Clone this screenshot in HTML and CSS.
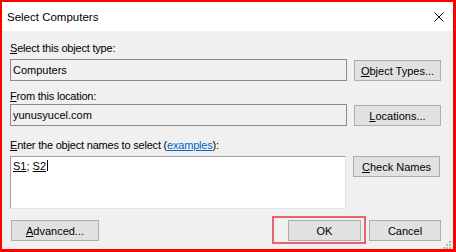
FILE: index.html
```html
<!DOCTYPE html>
<html lang="en">
<head>
    <meta charset="UTF-8">
    <meta name="viewport" content="width=device-width, initial-scale=1.0">
    <title>Select Computers</title>
    <link rel="stylesheet" href="styles.css">
</head>
<body>
    <div class="window">
        <div class="titlebar">
            <span class="title">Select Computers</span>
            <svg class="close" width="10" height="10" viewBox="0 0 10 10">
                <path d="M0.5 0.5 L9.5 9.5 M9.5 0.5 L0.5 9.5" stroke="#000" stroke-width="1" fill="none"/>
            </svg>
        </div>

        <div class="content">
            <div class="label"><u>S</u>elect this object type:</div>
            <div class="row">
                <div class="field">Computers</div>
                <button class="btn"><u>O</u>bject Types...</button>
            </div>

            <div class="label label-location"><u>F</u>rom this location:</div>
            <div class="row">
                <div class="field">yunusyucel.com</div>
                <button class="btn"><u>L</u>ocations...</button>
            </div>

            <div class="label label-names"><u>E</u>nter the object names to select (<a class="link" href="#">examples</a>):</div>
            <div class="row row-names">
                <div class="names"><span class="resolved">S1</span>; <span class="resolved">S2</span><span class="caret"></span></div>
                <button class="btn btn-top"><u>C</u>heck Names</button>
            </div>

            <div class="actions">
                <button class="btn btn-advanced"><u>A</u>dvanced...</button>
                <div class="spacer"></div>
                <div class="ok-wrap">
                    <button class="btn btn-ok">OK</button>
                    <span class="highlight"></span>
                </div>
                <button class="btn btn-cancel">Cancel</button>
            </div>
        </div>

        <svg class="grip" width="9" height="9" viewBox="0 0 9 9">
            <rect x="6" y="1" width="2" height="2" fill="#b8b8b8"/>
            <rect x="3" y="4" width="2" height="2" fill="#b8b8b8"/>
            <rect x="6" y="4" width="2" height="2" fill="#b8b8b8"/>
            <rect x="0" y="7" width="2" height="2" fill="#b8b8b8"/>
            <rect x="3" y="7" width="2" height="2" fill="#b8b8b8"/>
            <rect x="6" y="7" width="2" height="2" fill="#b8b8b8"/>
        </svg>
    </div>
</body>
</html>
```

FILE: styles.css
```css
body {
    margin: 0;
    font-family: 'Liberation Sans', Arial, sans-serif;
    font-size: 11px;
    color: #000;
}

.window {
    position: relative;
    width: 456px;
    height: 252px;
    box-sizing: border-box;
    border: 2px solid #ff0000;
    border-right-width: 3px;
    border-bottom-width: 3px;
    display: flex;
    flex-direction: column;
}

.titlebar {
    height: 29px;
    flex-shrink: 0;
    background-color: #fff;
    display: flex;
    align-items: center;
    padding: 0 9px 0 5px;
}

.title {
    font-size: 11.5px;
    flex: 1;
}

.content {
    flex: 1;
    background-color: #f0f0f0;
    padding: 10px 12px 0 8px;
    display: flex;
    flex-direction: column;
}

.label {
    line-height: 15px;
    letter-spacing: -0.2px;
}

.label-location {
    margin-top: 8px;
}

.label-names {
    margin-top: 12px;
}

.link {
    color: #0066cc;
}

.row {
    display: flex;
    gap: 7px;
    margin-top: 3px;
    align-items: flex-start;
}

.label-location + .row {
    margin-top: 0;
}

.field {
    width: 337px;
    height: 22px;
    box-sizing: border-box;
    border: 1px solid #8c8c8c;
    padding-left: 2px;
    line-height: 20px;
}

.names {
    width: 336px;
    height: 53px;
    box-sizing: border-box;
    background-color: #fff;
    border: 1px solid #e3e3e3;
    border-top-color: #a0a0a0;
    border-left-color: #a0a0a0;
    padding: 2px 0 0 2px;
    line-height: 15px;
}

.resolved {
    text-decoration: underline;
}

.caret {
    display: inline-block;
    width: 1px;
    height: 11px;
    background-color: #000;
    margin-left: 1px;
    vertical-align: -1px;
}

.btn {
    width: 87px;
    height: 21px;
    margin-top: 1px;
    padding: 0;
    box-sizing: border-box;
    background-color: #e1e1e1;
    border: 1px solid #adadad;
    font-family: 'Liberation Sans', Arial, sans-serif;
    font-size: 11px;
    color: #000;
    text-align: center;
}

.btn-top {
    margin-top: 0;
}

.actions {
    display: flex;
    margin-top: 11px;
}

.spacer {
    flex: 1;
}

.btn-advanced {
    width: 88px;
    margin: 0 0 0 1px;
}

.ok-wrap {
    position: relative;
    display: flex;
}

.btn-ok {
    width: 73px;
    margin: 0;
}

.btn-cancel {
    width: 72px;
    margin: 0 0 0 8px;
}

.highlight {
    position: absolute;
    left: -16px;
    top: -4px;
    right: -5px;
    bottom: -3px;
    border: 2px solid #e8666b;
}

.grip {
    position: absolute;
    right: 1px;
    bottom: 0;
}
```
